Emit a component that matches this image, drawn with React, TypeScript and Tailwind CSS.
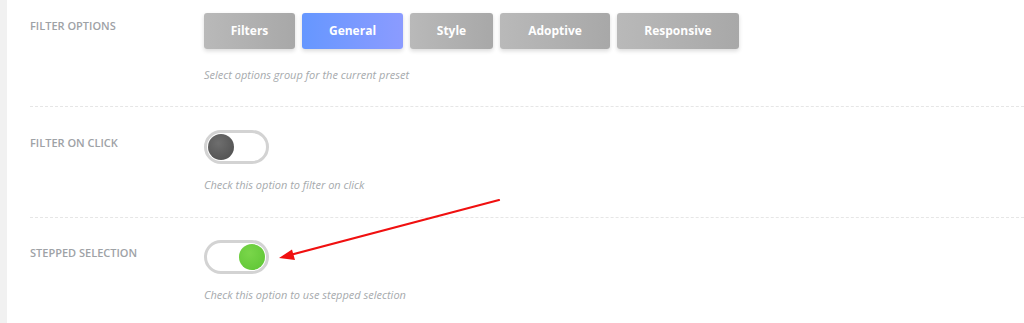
import { ReactNode } from 'react';

// Filter preset settings panel: option groups, two toggles and an annotation arrow.
const groups = ['Filters', 'General', 'Style', 'Adoptive', 'Responsive'];
const groupWidths: Record<string, string> = {
  Filters: 'w-[91px]',
  General: 'w-[101px]',
  Style: 'w-[83px]',
  Adoptive: 'w-[110px]',
  Responsive: 'w-[122px]',
};

function Row({ label, children }: { label: string; children: ReactNode }) {
  return (
    <div className="flex">
      <div className="w-[174px] shrink-0 pt-[6px] text-[11px] font-semibold uppercase leading-[14px] text-[#9ea2a6]">{label}</div>
      <div className="flex-1">{children}</div>
    </div>
  );
}

function Toggle({ on }: { on?: boolean }) {
  return (
    <div className={`flex h-[34px] w-[65px] items-center rounded-full border-[3px] border-[#d3d3d3] bg-white px-[1px] ${on ? 'justify-end' : 'justify-start'}`}>
      <span
        className={`h-[26px] w-[26px] rounded-full ${on ? 'bg-[radial-gradient(circle_at_40%_35%,#7ad64a,#5cc433)]' : 'bg-[radial-gradient(circle_at_40%_35%,#6e6e6e,#4c4c4c)]'}`}
      />
    </div>
  );
}

function Hint({ children }: { children: ReactNode }) {
  return <p className="text-[11px] italic leading-4 text-[#a6aaad]">{children}</p>;
}

export default function App() {
  return (
    <main className="relative flex h-[323px] w-[1024px] overflow-hidden bg-white font-['Open_Sans',sans-serif]">
      <div className="w-[7px] shrink-0 bg-[#f1f1f1]" />
      <div className="flex-1 pl-[23px]">
        <div className="pt-[13px] pb-[23px]">
          <Row label="Filter options">
            <div className="flex gap-[7px]">
              {groups.map((g) => (
                <button
                  key={g}
                  className={`h-9 rounded-[3px] text-[12px] font-bold text-white shadow-[0_2px_4px_rgba(0,0,0,0.15)] ${groupWidths[g]} ${g === 'General' ? 'bg-gradient-to-r from-[#6597ff] to-[#8b9bff]' : 'bg-gradient-to-r from-[#b9b9b9] to-[#a8a8a8]'}`}
                >
                  {g}
                </button>
              ))}
            </div>
            <div className="mt-[18px]">
              <Hint>Select options group for the current preset</Hint>
            </div>
          </Row>
        </div>
        <div className="border-t border-dashed border-[#e6e6e6] pt-[23px] pb-[24px]">
          <Row label="Filter on click">
            <Toggle />
            <div className="mt-[13px]">
              <Hint>Check this option to filter on click</Hint>
            </div>
          </Row>
        </div>
        <div className="border-t border-dashed border-[#e6e6e6] pt-[22px]">
          <Row label="Stepped selection">
            <Toggle on />
            <div className="mt-[13px]">
              <Hint>Check this option to use stepped selection</Hint>
            </div>
          </Row>
        </div>
      </div>
      <svg className="pointer-events-none absolute left-0 top-0" width="1024" height="323">
        <line x1="499" y1="200" x2="290" y2="255" stroke="#f01010" strokeWidth="2.2" strokeLinecap="round" />
        <polygon points="279,258 292,249.5 295,260" fill="#f01010" />
      </svg>
    </main>
  );
}
